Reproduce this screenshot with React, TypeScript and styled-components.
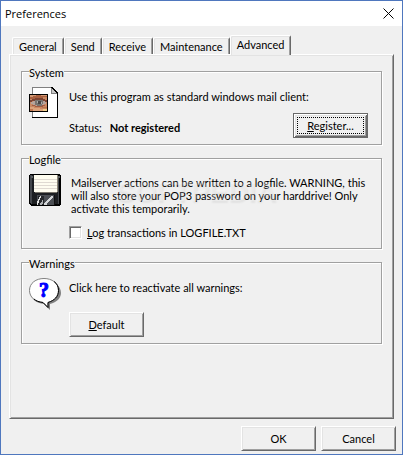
import React, { useState } from "react";
import styled, { createGlobalStyle, css } from "styled-components";

const face = "#f0f0f0";
const mid = "#a0a0a0";
const dark = "#696969";
const light = "#e3e3e3";

const GlobalStyle = createGlobalStyle`
  * { box-sizing: border-box; }
  body {
    margin: 0;
    background: ${face};
    color: #000;
    font: 11px/13px Lato, "Liberation Sans", sans-serif;
  }
`;

const raised = css`
  border: 1px solid;
  border-color: #fff ${dark} ${dark} #fff;
  box-shadow: inset 1px 1px ${light}, inset -1px -1px ${mid};
`;

const Dialog = styled.main`
  display: flex;
  flex-direction: column;
  min-height: 100vh;
  border: 1px solid #4f77be;
`;

const TitleBar = styled.header`
  display: flex;
  align-items: center;
  justify-content: space-between;
  height: 25px;
  padding: 0 8px 0 4px;
  background: #fff;
`;

const Title = styled.h1`
  margin: 0;
  font: 11px/16px "Open Sans", "Noto Sans", sans-serif;
`;

const CloseButton = styled.button`
  display: flex;
  padding: 0;
  border: 0;
  background: none;
`;

const Body = styled.div`
  display: flex;
  flex: 1;
  flex-direction: column;
  padding: 9px 8px 0;
`;

const TabList = styled.div`
  display: flex;
  align-items: flex-end;
  height: 19px;
  padding-left: 3px;
`;

const Tab = styled.button<{ $active: boolean }>`
  position: relative;
  height: ${(p) => (p.$active ? 20 : 17)}px;
  margin-bottom: ${(p) => (p.$active ? -1 : 0)}px;
  padding: 0 6px ${(p) => (p.$active ? 2 : 0)}px;
  border: 1px solid;
  border-color: #fff ${dark} transparent #fff;
  border-bottom: 0;
  border-radius: 2px 2px 0 0;
  background: ${face};
  box-shadow: inset 1px 1px ${light}, inset -1px 0 ${mid};
  color: #000;
  font: inherit;
  white-space: nowrap;
`;

const Panel = styled.section`
  display: flex;
  flex: 1;
  flex-direction: column;
  gap: 5px;
  padding: 8px 11px;
  ${raised}
`;

const Group = styled.fieldset`
  position: relative;
  min-width: 0;
  margin: 0;
  padding: 8px 13px 6px 7px;
  border: 1px solid ${mid};
  box-shadow: 1px 1px #fff, inset 1px 1px #fff;
`;

const Legend = styled.legend`
  margin: 0;
  padding: 3px 0 0;
  background: ${face};
`;

const GroupRow = styled.div`
  display: flex;
  gap: 8px;
`;

const Details = styled.div`
  display: flex;
  flex: 1;
  flex-direction: column;
  align-items: flex-start;
  min-width: 0;
`;

const Text = styled.p`
  margin: 0;
  padding-top: 3px;
`;

const StatusRow = styled.div`
  display: flex;
  align-self: stretch;
  align-items: center;
  justify-content: space-between;
  padding-top: 10px;
`;

const Status = styled.p`
  display: flex;
  gap: 8px;
  margin: 0;
  padding-top: 4px;
`;

const Note = styled.p`
  margin: 0;
  padding: 2px 0 0 2px;
`;

const CheckRow = styled.div`
  display: flex;
  align-items: center;
  gap: 5px;
  padding: 11px 0 3px;
`;

const CheckBox = styled.input`
  appearance: none;
  width: 13px;
  height: 13px;
  margin: 0;
  border: 1px solid;
  border-color: ${mid} #fff #fff ${mid};
  background: #fff;
  box-shadow: inset 1px 1px ${dark}, inset -1px -1px ${light};
  &:checked::after {
    content: "✓";
    display: block;
    line-height: 11px;
    text-align: center;
  }
`;

const Button = styled.button<{ $focused?: boolean }>`
  width: 75px;
  height: 25px;
  padding: 0;
  background: ${face};
  color: #000;
  font: inherit;
  ${raised}
  ${(p) =>
    p.$focused &&
    css`
      border-color: ${dark};
      box-shadow: inset 1px 1px #fff, inset -1px -1px ${dark}, inset 2px 2px ${light}, inset -2px -2px ${mid};
      span {
        display: block;
        margin: 3px;
        border: 1px dotted #000;
        line-height: 15px;
      }
    `}
`;

const DefaultSlot = styled.div`
  padding-top: 18px;
`;

const Footer = styled.footer`
  display: flex;
  justify-content: flex-end;
  gap: 5px;
  padding: 7px 6px 3px;
`;

const Watermark = styled.div`
  position: absolute;
  top: 10px;
  left: 94px;
  color: rgba(255, 255, 255, 0.25);
  font: bold 28px/32px "Liberation Sans", Arial, sans-serif;
  pointer-events: none;
  text-shadow: 1px 2px 2px rgba(0, 0, 0, 0.06);
  sup {
    font-size: 10px;
    line-height: 10px;
    vertical-align: 14px;
  }
`;

const CloseIcon = () => (
  <svg width="11" height="11" viewBox="0 0 11 11" aria-hidden="true">
    <path d="M.5.5l10 10M10.5.5l-10 10" stroke="#000" fill="none" />
  </svg>
);

const EyeDocumentIcon = () => (
  <svg width="32" height="32" viewBox="0 1 32 32" shapeRendering="crispEdges" aria-hidden="true">
    <path d="M3 1h20l6 6v25H3z" fill="#fff" />
    <path d="M3.5 31V1.5H23" fill="none" stroke="#808080" />
    <path d="M3 31.5h26M28.5 7v25" fill="none" stroke="#000" />
    <path d="M22 2h1v1h1v1h1v1h1v1h1v1h-5z" fill="#c8c8c8" />
    <path d="M22 1h2v1h1v1h1v1h1v1h1v1h1v2h-1V7h-1V6h-1V5h-1V4h-1V3h-1V2h-1z" fill="#000" />
    <path d="M22 2h1v5h5v1h-6z" fill="#808080" />
    <path d="M0 8h19v18H0z" fill="#000" />
    <path d="M1 9h17v16H1z" fill="#c98862" />
    <path d="M1 9h17v2h-4v1H6v1H1z" fill="#a9603f" />
    <path d="M1 9h6v1H4v1H1zM12 9h6v1h-6z" fill="#d39a75" />
    <path d="M1 14h2v-1h3v-1h8v1h2v1h2v2h-2v-1h-3v-1H6v1H3v1H1z" fill="#7c4433" />
    <path d="M2 16h2v-1h3v-1h7v1h2v1h1v2h-2v1h-3v1H7v-1H4v-1H2z" fill="#b6a39b" />
    <path d="M6 14h8v4h-1v2H8v-1H6z" fill="#77736f" />
    <path d="M9 15h3v3H9z" fill="#4a4645" />
    <path d="M8 15h1v2H8zM12 16h1v2h-1z" fill="#a9aaa8" />
    <path d="M3 19h3v1h7v-1h3v1h-2v1H6v-1H3z" fill="#a15c44" />
    <path d="M1 21h4v1h6v1h7v2H1z" fill="#dca37c" />
    <path d="M1 23h3v2H1zM13 21h5v1h-5z" fill="#bd754f" />
    <path d="M14 23h4v2h-4z" fill="#efd08c" />
  </svg>
);

const FloppyIcon = () => (
  <svg width="32" height="32" viewBox="0 0 32 32" shapeRendering="crispEdges" aria-hidden="true">
    <path d="M1 0h30v1h1v30h-1v1H2v-1H1v-1H0V1h1z" fill="#000" />
    <path d="M1 1h2v29H2v-1H1zM29 4h1v26h-1z" fill="#44474c" />
    <path d="M3 1h26v29H3z" fill="#1d1f22" />
    <path d="M5 1h24v17H5z" fill="#8c8778" />
    <path d="M5 1h23v17H5z" fill="#fffdf0" />
    <path d="M5 5h23v1H5zM5 8h23v1H5zM5 11h23v1H5zM5 14h23v1H5z" fill="#e0dad2" />
    <path d="M6 18h22v1H6z" fill="#77736a" />
    <path d="M2 2h2v2H2zM29 2h2v2h-2z" fill="#5c5f63" />
    <path d="M8 21h18v10H8z" fill="#4b4e53" />
    <path d="M9 22h6v9H9z" fill="#25272a" />
    <path d="M25 21h1v10h-1z" fill="#111" />
    <path d="M11 22h1v2h-1v2h-1v3H9v2H8v-4h1v-2h1v-2h1z" fill="#e2e2e2" />
    <path d="M22 22h2v2h-1v1h-1v1h-1v1h-1v1h-1v1h-1v2h-3v-2h1v-1h1v-1h1v-1h1v-1h1v-1h1v-1h1z" fill="#d5d7d9" />
    <path d="M13 26h1v4h-1v1h-2v-2h1v-1h1z" fill="#adb0b3" />
  </svg>
);

const QuestionIcon = () => (
  <svg width="32" height="32" viewBox="0 0 32 32" aria-hidden="true">
    <path
      d="M17 3C26 3 32 8 32 15c0 5-4 9-11 11v6l-6-6C7 25 2 21 2 15 2 8 8 3 17 3z"
      fill="#808080"
    />
    <path
      d="M15 .5C23 .5 29.500 5 29.500 12.500c0 6-4 10-10.500 12v5l-5-5C6 24 .5 19 .5 12.500 .5 5 7 .5 15 .5z"
      fill="#fff"
      stroke="#808080"
    />
    <path
      d="M25 3.500c3 2 4.500 5 4.500 9 0 6-4 10-10.500 12v5l-5-5c-4-.5-7-1.500-9-3.500"
      fill="none"
      stroke="#000"
    />
    <text
      x="15"
      y="19"
      fill="#00f"
      stroke="#00f"
      strokeWidth="1"
      fontFamily="Liberation Serif, serif"
      fontSize="20"
      fontWeight="bold"
      textAnchor="middle"
    >
      ?
    </text>
  </svg>
);

const tabs = ["General", "Send", "Receive", "Maintenance", "Advanced"];

export default function App() {
  const [active, setActive] = useState("Advanced");
  const [logging, setLogging] = useState(false);

  return (
    <>
      <GlobalStyle />
      <Dialog>
        <TitleBar>
          <Title>Preferences</Title>
          <CloseButton type="button" aria-label="Close">
            <CloseIcon />
          </CloseButton>
        </TitleBar>
        <Body>
          <TabList role="tablist">
            {tabs.map((name) => (
              <Tab
                key={name}
                type="button"
                role="tab"
                aria-selected={name === active}
                $active={name === active}
                onClick={() => setActive(name)}
              >
                {name}
              </Tab>
            ))}
          </TabList>
          <Panel role="tabpanel">
            <Group>
              <Legend>System</Legend>
              <GroupRow>
                <EyeDocumentIcon />
                <Details>
                  <Text>Use this program as standard windows mail client:</Text>
                  <StatusRow>
                    <Status>
                      Status: <strong>Not registered</strong>
                    </Status>
                    <Button type="button" $focused>
                      <span>
                        <u>R</u>egister...
                      </span>
                    </Button>
                  </StatusRow>
                </Details>
              </GroupRow>
            </Group>
            <Group>
              <Legend>Logfile</Legend>
              <GroupRow>
                <FloppyIcon />
                <Details>
                  <Note>
                    Mailserver actions can be written to a logfile. WARNING, this
                    <br />
                    will also store your POP3 password on your harddrive! Only
                    <br />
                    activate this temporarily.
                  </Note>
                  <CheckRow>
                    <CheckBox
                      id="log"
                      type="checkbox"
                      checked={logging}
                      onChange={(e) => setLogging(e.target.checked)}
                    />
                    <label htmlFor="log">
                      <u>L</u>og transactions in LOGFILE.TXT
                    </label>
                  </CheckRow>
                </Details>
              </GroupRow>
              <Watermark aria-hidden="true">
                SOFTPEDIA<sup>®</sup>
              </Watermark>
            </Group>
            <Group>
              <Legend>Warnings</Legend>
              <GroupRow>
                <QuestionIcon />
                <Details>
                  <Text>Click here to reactivate all warnings:</Text>
                  <DefaultSlot>
                    <Button type="button">
                      <u>D</u>efault
                    </Button>
                  </DefaultSlot>
                </Details>
              </GroupRow>
            </Group>
          </Panel>
        </Body>
        <Footer>
          <Button type="button">OK</Button>
          <Button type="button">Cancel</Button>
        </Footer>
      </Dialog>
    </>
  );
}
